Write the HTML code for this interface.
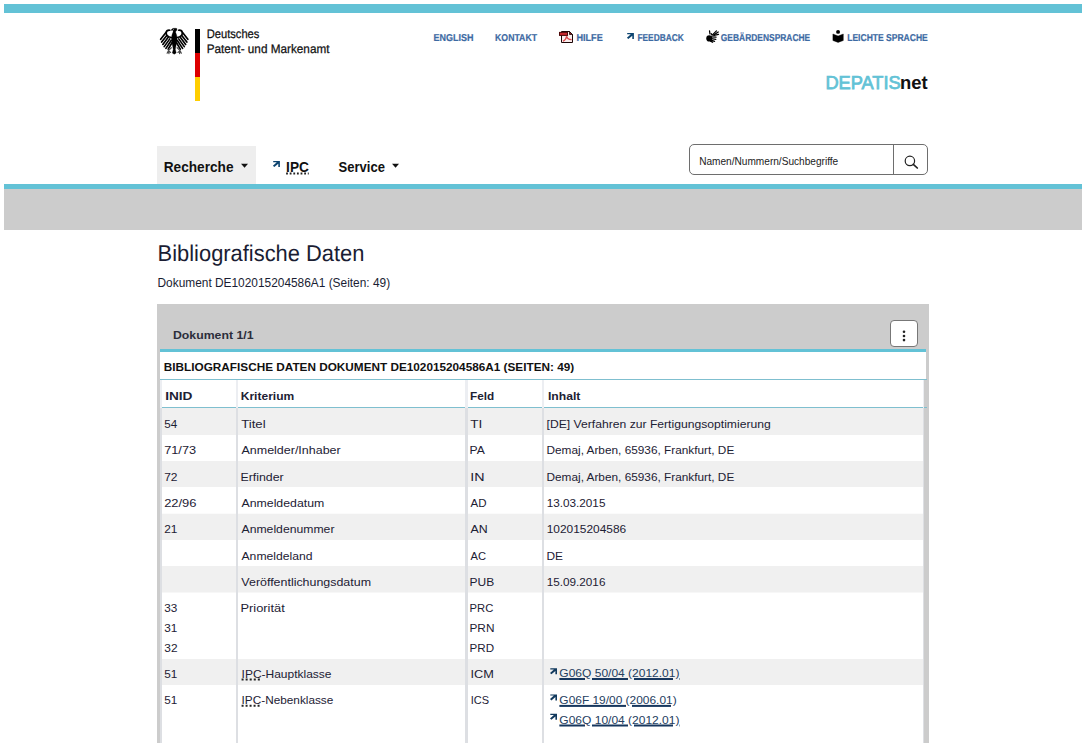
<!DOCTYPE html>
<html lang="de">
<head>
<meta charset="utf-8">
<title>DEPATISnet | Bibliografische Daten</title>
<style>
  html, body { margin: 0; padding: 0; background: #fff; }
  body { width: 1087px; height: 745px; overflow: hidden; position: relative;
         font-family: "Liberation Sans", Arial, sans-serif; color: #1d2134; }
  .abs { position: absolute; }
  .t { position: absolute; margin: 0; padding: 0; white-space: nowrap; line-height: 1;
       font-weight: 400; font-style: normal; transform-origin: 0 0; color: #1d2134; }
  a.t { text-decoration: none; }
  abbr, abbr.t { text-decoration-skip-ink: none; text-decoration: underline dotted #222; text-decoration-thickness: 1.5px; text-underline-offset: 1.2px; }
  a.lk { text-decoration: underline; text-decoration-color: #17375e; text-decoration-thickness: 1.6px; text-underline-offset: 0.6px; }
  .bar { position: absolute; left: 4px; width: 1078px; background: #63c2d6; }
  .ico { position: absolute; display: block; overflow: visible; }
  .stripe { position: absolute; left: 160px; width: 763px; background: #f0f0f0; }
  .vline { position: absolute; top: 408px; height: 335px; width: 2px; background: #dddfe3; }
  .vline.h { top: 380px; height: 28px; background: #eceef2; }
  .hline { position: absolute; left: 160px; width: 767px; height: 1px; background: #7fbfcf; }
</style>
</head>
<body>

<!-- ============ HEADER ============ -->
<header>
  <div class="bar" style="top:4px;height:9px"></div>

  <!-- Bundesadler -->
  <svg class="ico" style="left:159px;top:27px" width="30" height="28" viewBox="65.8 65.8 657.5 613.7" aria-label="Bundesadler">
    <g fill="#000" stroke="#000" stroke-linecap="round" stroke-linejoin="round">
      <!-- body -->
      <path stroke-width="6" d="M392 150 C352 200 330 290 342 370 C350 430 372 500 378 560 L356 636 L400 664 L444 636 L424 560 C430 500 452 430 460 370 C472 290 448 200 410 150 Z"/>
      <!-- head -->
      <path stroke-width="6" d="M338 120 C350 92 420 84 458 100 C464 128 452 158 420 174 L376 174 C384 152 380 142 362 138 L334 144 Z"/>
      <!-- wing arches -->
      <path fill="none" stroke-width="36" d="M336 296 C262 280 220 238 224 188 C228 148 262 132 304 136"/>
      <path fill="none" stroke-width="36" d="M464 296 C538 280 580 238 576 188 C572 148 538 132 496 136"/>
      <!-- feathers -->
      <g fill="none" stroke-width="37">
        <path d="M218 184 L102 334"/>
        <path d="M232 256 L124 396"/>
        <path d="M268 292 L150 448"/>
        <path d="M302 326 L180 496"/>
        <path d="M332 362 L218 534"/>
        <path d="M350 410 L268 552"/>
        <path d="M582 184 L698 334"/>
        <path d="M568 256 L676 396"/>
        <path d="M532 292 L650 448"/>
        <path d="M498 326 L620 496"/>
        <path d="M468 362 L582 534"/>
        <path d="M450 410 L532 552"/>
      </g>
      <!-- legs / claws -->
      <g fill="none" stroke="#4a4a4a" stroke-width="26">
        <path d="M336 520 L272 584 M272 584 L244 640 M272 584 L284 648 M272 584 L320 624"/>
        <path d="M464 520 L528 584 M528 584 L556 640 M528 584 L516 648 M528 584 L480 624"/>
      </g>
    </g>
    <!-- eye -->
    <circle cx="386" cy="120" r="9" fill="#fff"/>
  </svg>

  <!-- Flag bar -->
  <div class="abs" style="left:195.3px;top:29px;width:4.7px;height:72px;background:linear-gradient(#000 0,#000 33.5%,#dd0000 33.5%,#dd0000 66.6%,#ffce00 66.6%,#ffce00 100%)"></div>

  <span class="t" style="left:206px;top:28px;font-size:12.35px;color:#111111;transform:translate(0.70px,0.40px) scaleX(0.9037);text-rendering:geometricPrecision;-webkit-text-stroke:0.25px #111;">Deutsches</span>
  <span class="t" style="left:206px;top:43px;font-size:12.35px;color:#111111;transform:translate(0.65px,0.40px) scaleX(0.9523);text-rendering:geometricPrecision;-webkit-text-stroke:0.25px #111;">Patent- und Markenamt</span>

  <nav aria-label="Meta">
    <a class="t" href="#" style="left:433px;top:33px;font-size:10.0px;font-weight:700;color:#3d6aa3;transform:translate(0.44px,0.90px) scaleX(0.8986);text-rendering:geometricPrecision;-webkit-text-stroke:0.2px #3d6aa3;">ENGLISH</a>
    <a class="t" href="#" style="left:495px;top:33px;font-size:10.0px;font-weight:700;color:#3d6aa3;transform:translate(0.06px,0.90px) scaleX(0.8718);text-rendering:geometricPrecision;-webkit-text-stroke:0.2px #3d6aa3;">KONTAKT</a>
    <!-- pdf icon -->
    <svg class="ico" style="left:558px;top:30px" width="16" height="14" viewBox="0 0 16 14">
      <path d="M3.5 1.5 H11.5 L14.5 4.5 V12.5 H3.5 Z" fill="#fbeeee" stroke="#1c0606" stroke-width="1"/>
      <path d="M11.5 1.5 V4.5 H14.5 Z" fill="#8a1a1e" stroke="#1c0606" stroke-width="0.8"/>
      <path d="M5 11.2 C7.2 10 8.4 8 8.6 6.2 C9 8.4 10.8 9.6 13.6 9.6" fill="none" stroke="#d9474b" stroke-width="1.3"/>
      <rect x="1.5" y="2.4" width="8" height="3" fill="#c9292e" stroke="#4d0808" stroke-width="1"/>
    </svg>
    <a class="t" href="#" style="left:576px;top:33px;font-size:10.0px;font-weight:700;color:#3d6aa3;transform:translate(0.43px,0.90px) scaleX(0.9112);text-rendering:geometricPrecision;-webkit-text-stroke:0.2px #3d6aa3;">HILFE</a>
    <svg class="ico" style="left:626px;top:33px" width="9" height="8" viewBox="0 0 9 8"><path d="M1.20 0.00 L7.90 0.00 L7.90 6.00 L6.30 6.00 L6.30 2.70 L2.30 6.00 L0.90 4.70 L4.80 1.20 L1.20 1.20 Z" fill="#0d4470"/></svg>
    <a class="t" href="#" style="left:637px;top:33px;font-size:10.0px;font-weight:700;color:#3d6aa3;transform:translate(0.48px,0.90px) scaleX(0.8329);text-rendering:geometricPrecision;-webkit-text-stroke:0.2px #3d6aa3;">FEEDBACK</a>
    <!-- sign language icon -->
    <svg class="ico" style="left:705px;top:29px" width="16" height="15" viewBox="101.7 101.7 542.4 508.5">
      <g fill="#000" stroke="#000" stroke-linecap="round">
        <ellipse cx="245" cy="420" rx="100" ry="105" stroke="none"/>
        <path d="M255 165 L270 270" stroke-width="42" fill="none"/>
        <g fill="none" stroke-width="46">
          <path d="M300 370 L475 378"/>
          <path d="M320 430 L465 452"/>
          <path d="M310 480 L425 520"/>
          <path d="M290 510 L360 548"/>
        </g>
        <g fill="none" stroke-width="44">
          <path d="M345 310 L490 165"/>
          <path d="M390 310 L550 205"/>
          <path d="M410 318 L560 285"/>
          <path d="M310 260 L340 300"/>
        </g>
      </g>
    </svg>
    <a class="t" href="#" style="left:720px;top:33px;font-size:10.0px;font-weight:700;color:#3d6aa3;transform:translate(0.78px,0.90px) scaleX(0.8427);text-rendering:geometricPrecision;-webkit-text-stroke:0.2px #3d6aa3;">GEBÄRDENSPRACHE</a>
    <!-- easy language icon -->
    <svg class="ico" style="left:832px;top:29px" width="13" height="15" viewBox="832 29 13 15">
      <circle cx="838.05" cy="31.9" r="1.95" fill="#000"/>
      <path d="M832.9 34 L838.1 36 L843.3 34 V40.5 L838.1 42.4 L832.9 40.5 Z" fill="#000" stroke="#000" stroke-width="0.4" stroke-linejoin="round"/>
    </svg>
    <a class="t" href="#" style="left:847px;top:33px;font-size:10.0px;font-weight:700;color:#3d6aa3;transform:translate(0.22px,0.90px) scaleX(0.8529);text-rendering:geometricPrecision;-webkit-text-stroke:0.2px #3d6aa3;">LEICHTE SPRACHE</a>
  </nav>

  <div aria-label="DEPATISnet"><span class="t" style="left:825px;top:74px;font-size:18.2px;color:#63c2d6;transform:translate(0.40px,0.10px) scaleX(1.0031);-webkit-text-stroke:0.75px #63c2d6;">DEPATIS</span><span class="t" style="left:899px;top:74px;font-size:18.2px;font-weight:700;color:#111111;transform:translate(0.98px,0.10px) scaleX(1.0145);">net</span></div>

  <!-- main navigation -->
  <nav aria-label="Hauptnavigation">
    <div class="abs" style="left:157px;top:146px;width:99px;height:38px;background:#eeeeee"></div>
    <span class="t" style="left:163px;top:158px;font-size:15.1px;font-weight:700;color:#111111;transform:translate(0.70px,0.60px) scaleX(0.9043);">Recherche</span>
    <svg class="ico" style="left:241px;top:163px" width="9" height="6" viewBox="0 0 9 6"><path d="M0.00 0.80 H7.00 L3.50 4.80 Z" fill="#111"/></svg>
    <svg class="ico" style="left:272px;top:161px" width="9" height="8" viewBox="0 0 9 8"><path d="M1.20 0.00 L7.90 0.00 L7.90 6.00 L6.30 6.00 L6.30 2.70 L2.30 6.00 L0.90 4.70 L4.80 1.20 L1.20 1.20 Z" fill="#0d4470"/></svg>
    <abbr class="t" style="left:286px;top:158px;font-size:15.1px;font-weight:700;color:#111111;transform:translate(0.09px,0.60px) scaleX(0.9053);text-underline-offset:1.1px;text-decoration-thickness:1.7px;">IPC</abbr>
    <span class="t" style="left:338px;top:158px;font-size:15.1px;font-weight:700;color:#111111;transform:translate(0.47px,0.60px) scaleX(0.8645);">Service</span>
    <svg class="ico" style="left:392px;top:163px" width="9" height="6" viewBox="0 0 9 6"><path d="M0.00 0.80 H7.00 L3.50 4.80 Z" fill="#111"/></svg>
  </nav>

  <!-- search -->
  <form class="abs" style="left:689px;top:144px;width:237px;height:29px;border:1px solid #6e6e6e;border-radius:5px;background:#fff">
    <div class="abs" style="left:203px;top:0;width:1px;height:29px;background:#6e6e6e"></div>
    <svg class="ico" style="left:212px;top:8px" width="18" height="18" viewBox="902 153 18 18">
      <circle cx="909.9" cy="160.9" r="4.7" fill="none" stroke="#222" stroke-width="1.2"/>
      <path d="M913.3 164.3 L917.3 168" stroke="#222" stroke-width="1.7" stroke-linecap="round"/>
    </svg>
  </form>
  <span class="t" style="left:699px;top:156px;font-size:10.2px;color:#222;transform:translate(0.13px,0.90px) scaleX(0.9919);">Namen/Nummern/Suchbegriffe</span>

  <div class="bar" style="top:183.6px;height:5.4px"></div>
  <div class="abs" style="left:4px;top:189px;width:1078px;height:41px;background:#cccccc"></div>
</header>

<!-- ============ MAIN ============ -->
<main>
  <h1 class="t" style="left:157px;top:242px;font-size:22.8px;color:#1a1d33;transform:translate(0.60px,0.40px) scaleX(0.9603);text-rendering:geometricPrecision;">Bibliografische Daten</h1>
  <p class="t" style="left:157px;top:276px;font-size:12.0px;color:#1a1d33;transform:translate(0.51px,0.75px) scaleX(0.9905);">Dokument DE102015204586A1 (Seiten: 49)</p>

  <section>
    <div class="abs" style="left:157px;top:304px;width:772px;height:439px;background:#cccccc"></div>
    <h2 class="t" style="left:172px;top:329px;font-size:11.8px;font-weight:700;color:#2b2e3b;transform:translate(0.97px,0.90px) scaleX(1.0407);">Dokument 1/1</h2>
    <!-- menu button -->
    <div class="abs" style="left:890.3px;top:320px;width:26.2px;height:24.8px;border:1px solid #777;border-radius:4px;background:#fff">
      <svg class="ico" style="left:11px;top:9px" width="4" height="12" viewBox="0 0 4 12"><circle cx="2" cy="1.8" r="1.3" fill="#222"/><circle cx="2" cy="5.95" r="1.3" fill="#222"/><circle cx="2" cy="10.1" r="1.3" fill="#222"/></svg>
    </div>

    <!-- table surface -->
    <div class="abs" style="left:160px;top:349px;width:766px;height:31px;background:#fff"></div>
    <div class="abs" style="left:160px;top:380px;width:764px;height:363px;background:#fff"></div>
    <div class="abs" style="left:160px;top:349px;width:766px;height:3px;background:#63c2d6"></div>
    <h3 class="t" style="left:163px;top:361px;font-size:11.8px;font-weight:700;color:#111111;transform:translate(0.85px,0.75px) scaleX(0.9973);">BIBLIOGRAFISCHE DATEN DOKUMENT DE102015204586A1 (SEITEN: 49)</h3>
    <div class="hline" style="top:379px"></div>
    <div class="hline" style="top:407px"></div>

    <!-- zebra rows -->
    <div class="stripe" style="top:408px;height:27px"></div>
    <div class="stripe" style="top:461px;height:26px"></div>
    <div class="stripe" style="top:514px;height:26px;box-shadow:0 -1px 0 #fbfbfb"></div>
    <div class="stripe" style="top:566px;height:26px;box-shadow:0 1px 0 #f7f7f7"></div>
    <div class="stripe" style="top:659px;height:26px"></div>

    <!-- column rules -->
    <div class="vline h" style="left:160px"></div>
    <div class="vline h" style="left:922.6px;width:1.4px"></div>
    <div class="vline" style="left:160px"></div>
    <div class="vline" style="left:922.6px;width:1.4px"></div>
    <div class="vline h" style="left:236px"></div>
    <div class="vline h" style="left:465.3px;width:2.7px"></div>
    <div class="vline h" style="left:542px"></div>
    <div class="vline" style="left:236px"></div>
    <div class="vline" style="left:465.3px;width:2.7px"></div>
    <div class="vline" style="left:542px"></div>

    <div role="table">
      <div role="row"><span class="t" style="left:165px;top:390px;font-size:11.8px;font-weight:700;transform:translate(0.13px,0.60px) scaleX(1.1575);">INID</span><span class="t" style="left:240px;top:390px;font-size:11.8px;font-weight:700;transform:translate(0.74px,0.60px) scaleX(1.0196);">Kriterium</span><span class="t" style="left:470px;top:390px;font-size:11.8px;font-weight:700;transform:translate(0.00px,0.60px) scaleX(0.9956);">Feld</span><span class="t" style="left:547px;top:390px;font-size:11.8px;font-weight:700;transform:translate(0.93px,0.60px) scaleX(1.0318);">Inhalt</span></div>
      <div role="row"><span class="t" style="left:164px;top:419px;font-size:10.4px;transform:translate(0.33px,0.60px) scaleX(1.1172);">54</span><span class="t" style="left:241px;top:418px;font-size:11.8px;transform:translate(0.22px,0.60px) scaleX(1.1138);">Titel</span><span class="t" style="left:470px;top:418px;font-size:11.8px;transform:translate(0.21px,0.60px) scaleX(1.1562);">TI</span><span class="t" style="left:546px;top:418px;font-size:11.8px;transform:translate(0.60px,0.60px) scaleX(1.0295);">[DE] Verfahren zur Fertigungsoptimierung</span></div>
      <div role="row"><span class="t" style="left:164px;top:445px;font-size:10.4px;transform:translate(0.14px,0.90px) scaleX(1.2279);">71/73</span><span class="t" style="left:241px;top:444px;font-size:11.8px;transform:translate(0.50px,0.90px) scaleX(1.0574);">Anmelder/Inhaber</span><span class="t" style="left:469px;top:444px;font-size:11.8px;transform:translate(0.47px,0.90px) scaleX(1.0270);">PA</span><span class="t" style="left:546px;top:444px;font-size:11.8px;transform:translate(0.50px,0.90px) scaleX(1.0013);">Demaj, Arben, 65936, Frankfurt, DE</span></div>
      <div role="row"><span class="t" style="left:164px;top:472px;font-size:10.4px;transform:translate(0.17px,0.60px) scaleX(1.1571);">72</span><span class="t" style="left:240px;top:471px;font-size:11.8px;transform:translate(0.45px,0.60px) scaleX(1.0467);">Erfinder</span><span class="t" style="left:470px;top:471px;font-size:11.8px;transform:translate(0.34px,0.60px) scaleX(1.2103);">IN</span><span class="t" style="left:546px;top:471px;font-size:11.8px;transform:translate(0.50px,0.60px) scaleX(1.0013);">Demaj, Arben, 65936, Frankfurt, DE</span></div>
      <div role="row"><span class="t" style="left:164px;top:498px;font-size:10.4px;transform:translate(0.13px,0.60px) scaleX(1.2438);">22/96</span><span class="t" style="left:241px;top:497px;font-size:11.8px;transform:translate(0.50px,0.60px) scaleX(1.0429);">Anmeldedatum</span><span class="t" style="left:470px;top:497px;font-size:11.8px;transform:translate(0.50px,0.60px) scaleX(0.9764);">AD</span><span class="t" style="left:546px;top:498px;font-size:10.4px;transform:translate(0.65px,0.60px) scaleX(1.1302);">13.03.2015</span></div>
      <div role="row"><span class="t" style="left:164px;top:524px;font-size:10.4px;transform:translate(0.18px,0.80px) scaleX(1.1435);">21</span><span class="t" style="left:241px;top:523px;font-size:11.8px;transform:translate(0.50px,0.80px) scaleX(1.0349);">Anmeldenummer</span><span class="t" style="left:470px;top:523px;font-size:11.8px;transform:translate(0.50px,0.80px) scaleX(1.0484);">AN</span><span class="t" style="left:546px;top:524px;font-size:10.4px;transform:translate(0.64px,0.80px) scaleX(1.1465);">102015204586</span></div>
      <div role="row"><span class="t" style="left:241px;top:550px;font-size:11.8px;transform:translate(0.50px,0.60px) scaleX(1.0312);">Anmeldeland</span><span class="t" style="left:470px;top:550px;font-size:11.8px;transform:translate(0.50px,0.60px) scaleX(0.9449);">AC</span><span class="t" style="left:546px;top:550px;font-size:11.8px;transform:translate(0.49px,0.60px) scaleX(1.0084);">DE</span></div>
      <div role="row"><span class="t" style="left:241px;top:576px;font-size:11.8px;transform:translate(0.37px,0.70px) scaleX(1.0532);">Veröffentlichungsdatum</span><span class="t" style="left:469px;top:576px;font-size:11.8px;transform:translate(0.48px,0.70px) scaleX(1.0166);">PUB</span><span class="t" style="left:546px;top:577px;font-size:10.4px;transform:translate(0.65px,0.70px) scaleX(1.1302);">15.09.2016</span></div>
      <div role="row"><span class="t" style="left:164px;top:603px;font-size:10.4px;transform:translate(0.33px,0.50px) scaleX(1.1302);">33</span><span class="t" style="left:164px;top:623px;font-size:10.4px;transform:translate(0.33px,0.50px) scaleX(1.1302);">31</span><span class="t" style="left:164px;top:643px;font-size:10.4px;transform:translate(0.32px,0.50px) scaleX(1.1435);">32</span><span class="t" style="left:240px;top:602px;font-size:11.8px;transform:translate(0.41px,0.50px) scaleX(1.0915);">Priorität</span><span class="t" style="left:469px;top:602px;font-size:11.8px;transform:translate(0.55px,0.50px) scaleX(0.9519);">PRC</span><span class="t" style="left:469px;top:622px;font-size:11.8px;transform:translate(0.50px,0.50px) scaleX(1.0000);">PRN</span><span class="t" style="left:469px;top:642px;font-size:11.8px;transform:translate(0.52px,0.50px) scaleX(0.9840);">PRD</span></div>
      <div role="row"><span class="t" style="left:164px;top:669px;font-size:10.4px;transform:translate(0.33px,0.50px) scaleX(1.1302);">51</span><span class="t" style="left:241px;top:668px;font-size:11.8px;transform:translate(0.56px,0.50px) scaleX(1.0164);"><abbr title="Internationale Patentklassifikation">IPC</abbr>-Hauptklasse</span><span class="t" style="left:470px;top:668px;font-size:11.8px;transform:translate(0.49px,0.50px) scaleX(1.0795);">ICM</span>
        <svg class="ico" style="left:550px;top:668px" width="9" height="8" viewBox="0 0 9 8"><path d="M0.30 0.20 L7.00 0.20 L7.00 6.20 L5.40 6.20 L5.40 2.90 L1.40 6.20 L0.00 4.90 L3.90 1.40 L0.30 1.40 Z" fill="#123a5e"/></svg>
        <a class="t lk" href="#" style="left:559px;top:668px;font-size:11.8px;color:#25405f;transform:translate(0.36px,0.00px) scaleX(1.0171);">G06Q 50/04 (2012.01)</a>
      </div>
      <div role="row"><span class="t" style="left:164px;top:695px;font-size:10.4px;transform:translate(0.33px,0.70px) scaleX(1.1302);">51</span><span class="t" style="left:241px;top:694px;font-size:11.8px;transform:translate(0.58px,0.70px) scaleX(0.9992);"><abbr title="Internationale Patentklassifikation">IPC</abbr>-Nebenklasse</span><span class="t" style="left:470px;top:694px;font-size:11.8px;transform:translate(0.65px,0.70px) scaleX(0.9333);">ICS</span>
        <svg class="ico" style="left:550px;top:694px" width="9" height="8" viewBox="0 0 9 8"><path d="M0.30 0.40 L7.00 0.40 L7.00 6.40 L5.40 6.40 L5.40 3.10 L1.40 6.40 L0.00 5.10 L3.90 1.60 L0.30 1.60 Z" fill="#123a5e"/></svg>
        <a class="t lk" href="#" style="left:559px;top:694px;font-size:11.8px;color:#25405f;transform:translate(0.37px,0.90px) scaleX(1.0100);">G06F 19/00 (2006.01)</a>
        <svg class="ico" style="left:550px;top:713px" width="9" height="8" viewBox="0 0 9 8"><path d="M0.30 0.80 L7.00 0.80 L7.00 6.80 L5.40 6.80 L5.40 3.50 L1.40 6.80 L0.00 5.50 L3.90 2.00 L0.30 2.00 Z" fill="#123a5e"/></svg>
        <a class="t lk" href="#" style="left:559px;top:714px;font-size:11.8px;color:#25405f;transform:translate(0.36px,0.50px) scaleX(1.0171);">G06Q 10/04 (2012.01)</a>
      </div>
    </div>
  </section>
</main>

</body>
</html>
